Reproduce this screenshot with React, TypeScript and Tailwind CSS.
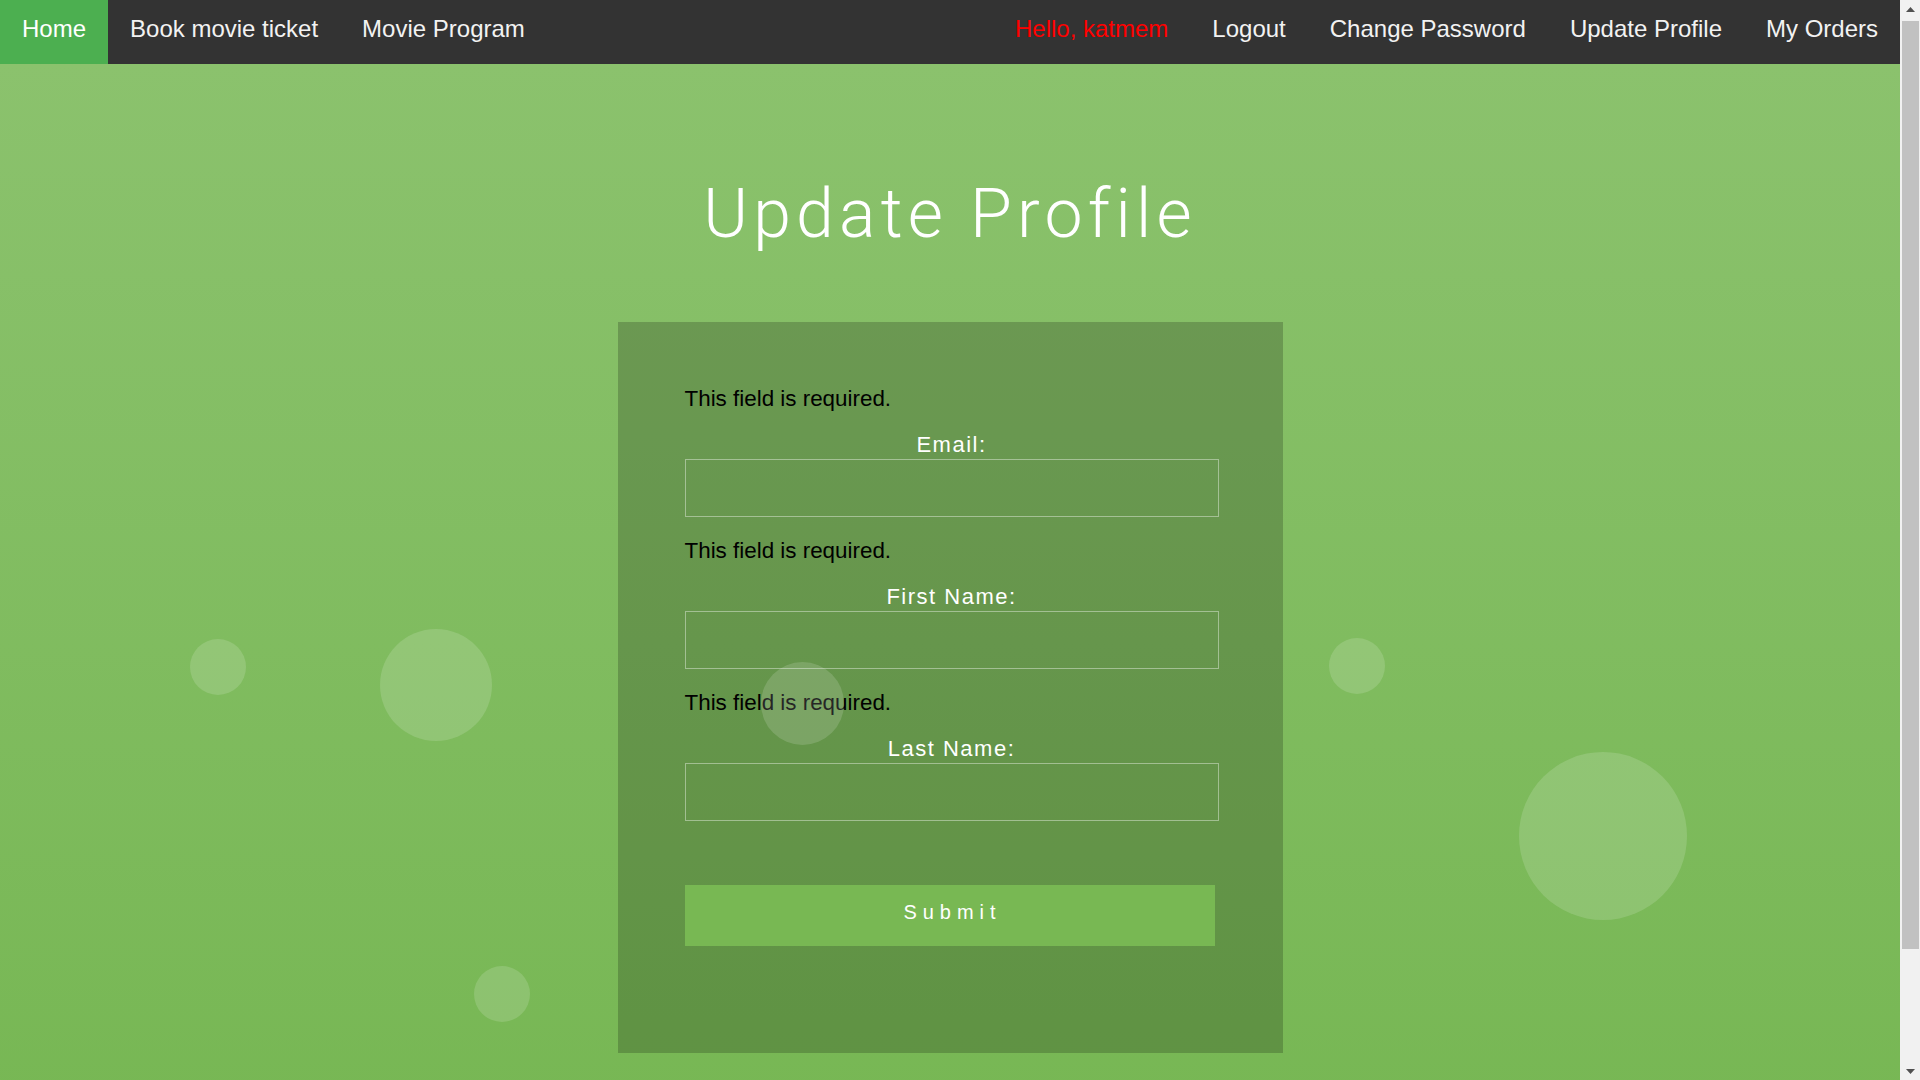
import React from 'react';

const leftLinks = ['Book movie ticket', 'Movie Program'];
const rightLinks = ['Logout', 'Change Password', 'Update Profile', 'My Orders'];

const fields = ['Email:', 'First Name:', 'Last Name:'];

const bubbles = [
  { left: 190, top: 575, size: 56 },
  { left: 380, top: 565, size: 112 },
  { left: 761, top: 598, size: 83 },
  { left: 1329, top: 574, size: 56 },
  { left: 1519, top: 688, size: 168 },
  { left: 474, top: 902, size: 56 },
];

const Scrollbar: React.FC = () => (
  <div className="flex w-[20px] shrink-0 flex-col bg-[#f1f1f1]">
    <div className="flex h-[18px] items-center justify-center pl-px">
      <svg width="9" height="5" viewBox="0 0 9 5">
        <path d="M4.5 0 L9 5 L0 5 Z" fill="#505050" />
      </svg>
    </div>
    <div className="ml-[2px] mr-px mt-[3px] h-[928px] bg-[#c1c1c1]" />
    <div className="mt-auto flex h-[18px] items-center justify-center pl-px">
      <svg width="9" height="5" viewBox="0 0 9 5">
        <path d="M0 0 L9 0 L4.5 5 Z" fill="#505050" />
      </svg>
    </div>
  </div>
);

const App: React.FC = () => {
  return (
    <div className="flex h-[1080px] overflow-hidden font-['Liberation_Sans',Arial,sans-serif]">
      <div className="w-[1900px] shrink-0">
        {/* Top navigation */}
        <nav className="flex h-16 bg-[#333333] text-[24px] leading-[26px] text-[#f2f2f2]">
          <a className="bg-[#4caf50] px-[22px] pt-[16px] text-white">Home</a>
          {leftLinks.map((l) => (
            <a key={l} className="px-[22px] pt-[16px]">
              {l}
            </a>
          ))}
          <div className="ml-auto flex">
            <span className="px-[22px] pt-[16px] text-[#ff0000]">Hello, katmem</span>
            {rightLinks.map((l) => (
              <a key={l} className="px-[22px] pt-[16px]">
                {l}
              </a>
            ))}
          </div>
        </nav>

        <section className="relative h-[1152px] overflow-hidden bg-gradient-to-b from-[#8bc26d] to-[#75b651] pt-[116px]">
          <h1 className="h-[68px] text-center font-['Roboto',sans-serif] text-[68px] font-light leading-[68px] tracking-[5.2px] text-white">
            Update Profile
          </h1>

          <form className="mx-auto mt-[74px] flex w-[665px] flex-col bg-black/20 pb-[107px] pl-[67px] pr-[64px] pt-[64px]">
            {fields.map((f, i) => (
              <div key={f} className={i === 0 ? 'flex flex-col' : 'mt-[21px] flex flex-col'}>
                <p className="text-[22.4px] leading-[26px] text-black">This field is required.</p>
                <label className="mt-[20px] text-center text-[22px] leading-[26px] tracking-[1.5px] text-white">
                  {f}
                </label>
                <input
                  type="text"
                  className="mt-px h-[58px] w-full border border-white/40 bg-transparent px-3 text-[20px] text-white outline-none"
                />
              </div>
            ))}
            <button
              type="button"
              className="mt-[64px] h-[61px] w-[530px] bg-[#78b853] pb-[7px] pl-[6px] text-[20px] tracking-[6px] text-white"
            >
              Submit
            </button>
          </form>

          {/* floating bubbles */}
          {bubbles.map((b, i) => (
            <div
              key={i}
              className="pointer-events-none absolute rounded-full bg-white/15"
              style={{ left: b.left, top: b.top, width: b.size, height: b.size }}
            />
          ))}
        </section>
      </div>
      <Scrollbar />
    </div>
  );
};

export default App;
